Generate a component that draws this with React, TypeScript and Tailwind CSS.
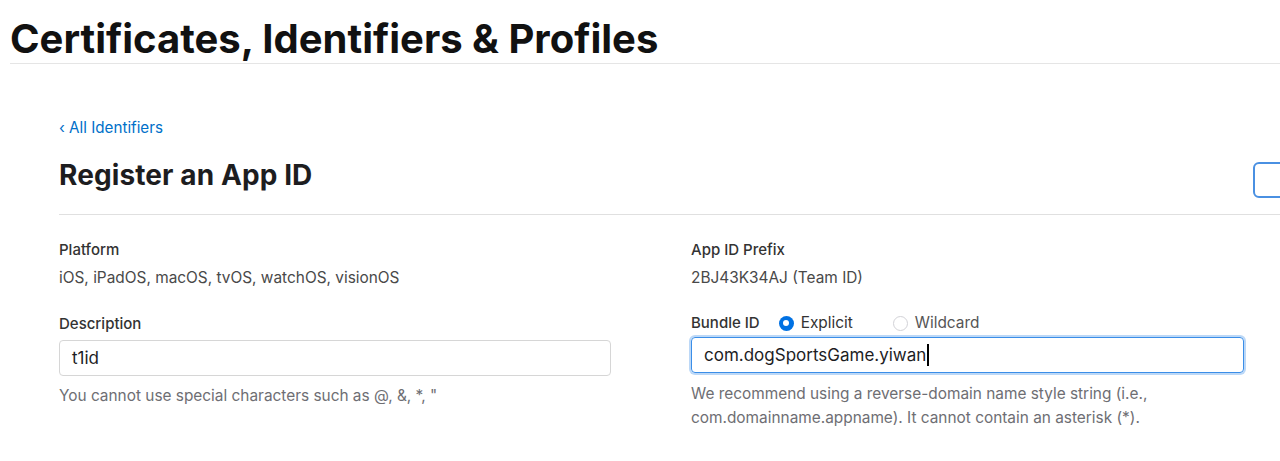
import React from 'react';

const font = { fontFamily: 'Inter, "Liberation Sans", sans-serif' };

const Radio: React.FC<{ checked?: boolean; label: string }> = ({ checked, label }) => (
  <label className="flex items-center gap-[7px]">
    {checked ? (
      <span className="w-[15px] h-[15px] rounded-full bg-[#0071e3] flex items-center justify-center">
        <span className="w-[6px] h-[6px] rounded-full bg-white" />
      </span>
    ) : (
      <span className="w-[15px] h-[15px] rounded-full border border-[#d2d2d7] bg-white" />
    )}
    <span className={checked ? 'text-[#333]' : 'text-[#555]'}>{label}</span>
  </label>
);

export default function App() {
  return (
    <div className="min-h-[461px] bg-white overflow-hidden" style={font}>
      {/* Top heading */}
      <div className="ml-[10px] h-[64px] border-b border-[#e5e5e5] pt-[15px]">
        <h1 className="text-[40px] leading-[48px] font-bold text-[#111]">
          Certificates, Identifiers &amp; Profiles
        </h1>
      </div>

      <div className="ml-[59px] w-[1281px]">
        {/* Back link + page header */}
        <a className="block mt-[54px] text-[15.2px] leading-[20px] text-[#0070c9]">
          ‹ All Identifiers
        </a>
        <div className="flex items-center justify-between mt-[14px] pb-[16px] border-b border-[#e0e0e0]">
          <h2 className="text-[28px] leading-[36px] font-bold text-[#1d1d1f] tracking-[0.1px]">
            Register an App ID
          </h2>
          <button className="w-[87px] h-[36px] mt-[10px] rounded-[6px] border-2 border-[#4a90e2] bg-white" />
        </div>

        {/* Form */}
        <div className="grid grid-cols-[552px_553px] gap-x-[80px] text-[15.4px] leading-[20px]">
          <div>
            <div className="mt-[25px] text-[15px] font-medium text-[#333]">Platform</div>
            <div className="mt-[8px] text-[#494949]">iOS, iPadOS, macOS, tvOS, watchOS, visionOS</div>
            <div className="mt-[26px] text-[15px] font-medium text-[#333]">Description</div>
            <div className="mt-[6px] h-[36px] rounded-[4px] border border-[#d6d6d6] px-[12px] flex items-center text-[17px] text-[#1d1d1f]">
              t1id
            </div>
            <div className="mt-[10px] text-[#6e6e73]">
              You cannot use special characters such as @, &amp;, *, "
            </div>
          </div>

          <div>
            <div className="mt-[25px] text-[15px] font-medium text-[#333]">App ID Prefix</div>
            <div className="mt-[8px] text-[#494949]">2BJ43K34AJ (Team ID)</div>
            <div className="mt-[25px] flex items-center">
              <span className="text-[15px] font-medium text-[#333]">Bundle ID</span>
              <div className="ml-[19px]">
                <Radio checked label="Explicit" />
              </div>
              <div className="ml-[40px]">
                <Radio label="Wildcard" />
              </div>
            </div>
            <div className="mt-[4px] h-[36px] rounded-[4px] border border-[#3b8ee8] ring-2 ring-[#bcd8f7] px-[12px] flex items-center text-[17px] text-[#1d1d1f]">
              com.dogSportsGame.yiwan
              <span className="ml-[1px] w-[2px] h-[22px] bg-black" />
            </div>
            <div className="mt-[9px] leading-[24px] text-[#6e6e73]">
              We recommend using a reverse-domain name style string (i.e.,
              <br />
              com.domainname.appname). It cannot contain an asterisk (*).
            </div>
          </div>
        </div>
      </div>
    </div>
  );
}
